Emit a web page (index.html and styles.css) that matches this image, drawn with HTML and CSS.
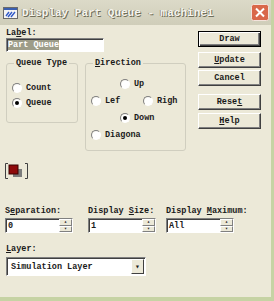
FILE: index.html
```html
<!DOCTYPE html>
<html lang="en">
<head>
    <meta charset="UTF-8">
    <title>Display Part Queue - machine1</title>
    <link rel="stylesheet" href="styles.css">
</head>
<body>

<div class="window">
    <!-- Title bar -->
    <div class="titlebar">
        <svg class="app-icon" width="15" height="12" viewBox="0 0 15 12">
            <rect x="0.5" y="0.5" width="14" height="11" fill="#f4f4f4" stroke="#6a6a6a"/>
            <rect x="1" y="1" width="13" height="2" fill="#3a5fb0"/>
            <path d="M3 9 L6 5 M5 10 L9 5 M8 10 L12 5" stroke="#2f58c8" stroke-width="1.4"/>
        </svg>
        <span class="title">Display Part Queue - machine1</span>
        <svg class="close" width="18" height="17" viewBox="0 0 18 17">
            <rect x="0.5" y="0.5" width="17" height="16" rx="2" fill="#d9674a" stroke="#f3e3dc"/>
            <path d="M5 4.5 L13 12.5 M13 4.5 L5 12.5" stroke="#fff" stroke-width="2"/>
        </svg>
    </div>

    <div class="content">
        <div class="top">
            <div class="left">
                <div class="caption">La<u>b</u>el:</div>
                <div class="textbox label-box"><span class="selected">Part Queue</span></div>

                <div class="groups">
                    <fieldset class="group queue-type">
                        <legend>Queue Type</legend>
                        <div class="opt"><span class="radio"></span>Count</div>
                        <div class="opt"><span class="radio on"></span>Queue</div>
                    </fieldset>

                    <fieldset class="group direction">
                        <legend><u>D</u>irection</legend>
                        <div class="dir-grid">
                            <div class="opt col2"><span class="radio"></span>Up</div>
                            <div class="opt col1"><span class="radio"></span>Lef</div>
                            <div class="opt col3"><span class="radio"></span>Righ</div>
                            <div class="opt col2"><span class="radio on"></span>Down</div>
                            <div class="opt col1"><span class="radio"></span>Diagona</div>
                        </div>
                    </fieldset>
                </div>
            </div>

            <div class="buttons">
                <div class="btn default">Draw</div>
                <div class="btn update"><u>U</u>pdate</div>
                <div class="btn cancel">Cancel</div>
                <div class="btn reset">Rese<u>t</u></div>
                <div class="btn help"><u>H</u>elp</div>
            </div>
        </div>

        <!-- Colour swatch -->
        <svg class="swatch" width="23" height="16" viewBox="0 0 23 16">
            <path d="M0.5 0.5 V15.5 M0.5 0.5 H3 M0.5 15.5 H3" stroke="#404040" fill="none"/>
            <path d="M22.5 0.5 V15.5 M22.5 0.5 H20 M22.5 15.5 H20" stroke="#404040" fill="none"/>
            <rect x="8" y="6" width="9" height="8" fill="#7c7c7c"/>
            <rect x="4" y="2" width="9" height="9" fill="#8e0a0a" stroke="#3a0000"/>
        </svg>

        <div class="spins">
            <div class="field sep">
                <div class="caption">S<u>e</u>paration:</div>
                <div class="spin"><div class="textbox">0</div><div class="arrows"><span>&#9652;</span><span>&#9662;</span></div></div>
            </div>
            <div class="field size">
                <div class="caption">Display <u>S</u>ize:</div>
                <div class="spin"><div class="textbox">1</div><div class="arrows"><span>&#9652;</span><span>&#9662;</span></div></div>
            </div>
            <div class="field max">
                <div class="caption">Display <u>M</u>aximum:</div>
                <div class="spin"><div class="textbox">All</div><div class="arrows"><span>&#9652;</span><span>&#9662;</span></div></div>
            </div>
        </div>

        <div class="caption layer-cap"><u>L</u>ayer:</div>
        <div class="dropdown">
            <span class="value">Simulation Layer</span>
            <span class="drop-btn">&#9662;</span>
        </div>
    </div>
</div>

</body>
</html>
```

FILE: styles.css
```css
/* Page */
body {
    margin: 0;
    background: #ece9d8;
    font-family: "Liberation Mono", "DejaVu Sans Mono", monospace;
    font-size: 8.5px;
    font-weight: bold;
    line-height: 10px;
    color: #1a1a1a;
}

/* Window frame */
.window {
    width: 271px;
    height: 297px;
    border-right: 3px solid #c6d3a4;
    border-bottom: 4px solid #c6d3a4;
    background: #ece9d8;
}

/* Title bar */
.titlebar {
    height: 25px;
    display: flex;
    align-items: center;
    background: linear-gradient(#dcdac8, #cfcdb9);
    padding-left: 3px;
}
.app-icon {
    margin-right: 4px;
}
.title {
    flex: 1;
    font-size: 11px;
    font-weight: bold;
    color: #f5f4ee;
    text-shadow: 1px 1px 0 #6f6d58, -1px 0 0 #9c9a84;
}
.close {
    margin-right: 2px;
}

/* Body */
.content {
    padding: 3px 0 0 6px;
}
.top {
    display: flex;
}
.left {
    width: 180px;
}
.caption {
    height: 10px;
    white-space: nowrap;
}

/* Text boxes */
.textbox {
    background: #fff;
    border: 1px solid;
    border-color: #808080 #fff #fff #808080;
    box-shadow: inset 1px 1px 0 #404040;
    height: 14px;
    box-sizing: border-box;
    padding: 1px 2px;
    line-height: 10px;
    white-space: nowrap;
    overflow: hidden;
}
.label-box {
    width: 98px;
    padding: 1px 1px;
}
.selected {
    background: #9d9c88;
    color: #fff;
}

/* Group boxes */
.groups {
    display: flex;
    margin-top: 6px;
}
.group {
    margin: 0;
    border: 1px solid #d0cebf;
    border-radius: 3px;
    padding: 0;
    box-sizing: border-box;
}
.group legend {
    padding: 0 2px;
    margin-left: 2px;
    line-height: 10px;
}
.queue-type {
    width: 72px;
    height: 65px;
    padding: 12px 0 0 5px;
}
.direction {
    width: 101px;
    height: 93px;
    margin-left: 7px;
    padding: 7px 0 0 5px;
}
.opt {
    display: flex;
    align-items: center;
    height: 15px;
    white-space: nowrap;
}
.radio {
    flex-shrink: 0;
    width: 10px;
    height: 10px;
    border-radius: 50%;
    border: 1px solid;
    border-color: #808080 #fff #fff #808080;
    background: radial-gradient(circle at 60% 60%, #fff 55%, #e6e3d2);
    box-sizing: border-box;
    margin-right: 4px;
    display: flex;
    align-items: center;
    justify-content: center;
}
.radio.on::after {
    content: "";
    width: 4px;
    height: 4px;
    border-radius: 50%;
    background: #000;
}
.dir-grid {
    display: grid;
    grid-template-columns: 29px 23px 1fr;
    grid-auto-rows: 17px;
    align-items: center;
}
.col1 { grid-column: 1; }
.col2 { grid-column: 2; }
.col3 { grid-column: 3; }

/* Command buttons */
.buttons {
    margin-left: 12px;
    margin-top: 3px;
    width: 63px;
}
.btn {
    height: 16px;
    box-sizing: border-box;
    border: 1px solid;
    border-color: #fff #404040 #404040 #fff;
    box-shadow: inset -1px -1px 0 #808080;
    display: flex;
    align-items: center;
    justify-content: center;
}
.btn.default {
    border: 1px solid #000;
    box-shadow: inset 1px 1px 0 #fff, inset -1px -1px 0 #404040, inset -2px -2px 0 #808080;
}
.btn.update { margin-top: 5px; }
.btn.cancel { margin-top: 2px; }
.btn.reset { margin-top: 8px; }
.btn.help { margin-top: 3px; }

/* Colour swatch */
.swatch {
    display: block;
    margin-top: 12px;
    margin-left: -1px;
}

/* Spin fields */
.spins {
    display: flex;
    margin-top: 27px;
}
.field .caption {
    margin-bottom: 2px;
}
.field.sep { width: 83px; margin-left: -1px; }
.field.size { width: 78px; }
.spin {
    display: flex;
    width: 68px;
    height: 15px;
    background: #fff;
    border: 1px solid;
    border-color: #808080 #fff #fff #808080;
    box-sizing: border-box;
}
.spin .textbox {
    flex: 1;
    border: none;
    box-shadow: inset 1px 1px 0 #404040;
    height: 13px;
    padding: 2px 2px 0;
}
.arrows {
    width: 13px;
    display: flex;
    flex-direction: column;
}
.arrows span {
    flex: 1;
    background: #ece9d8;
    border: 1px solid;
    border-color: #fff #808080 #808080 #fff;
    font-size: 5px;
    line-height: 4px;
    text-align: center;
    overflow: hidden;
}

/* Layer dropdown */
.layer-cap {
    margin-top: 11px;
}
.dropdown {
    margin-top: 3px;
    width: 140px;
    height: 19px;
    box-sizing: border-box;
    background: #fff;
    border: 1px solid;
    border-color: #808080 #fff #fff #808080;
    box-shadow: inset 1px 1px 0 #404040;
    display: flex;
    align-items: center;
    padding: 0 1px 0 4px;
}
.dropdown .value {
    flex: 1;
}
.drop-btn {
    width: 13px;
    height: 15px;
    box-sizing: border-box;
    background: #ece9d8;
    border: 1px solid;
    border-color: #fff #404040 #404040 #fff;
    font-size: 8px;
    line-height: 13px;
    text-align: center;
}
```
